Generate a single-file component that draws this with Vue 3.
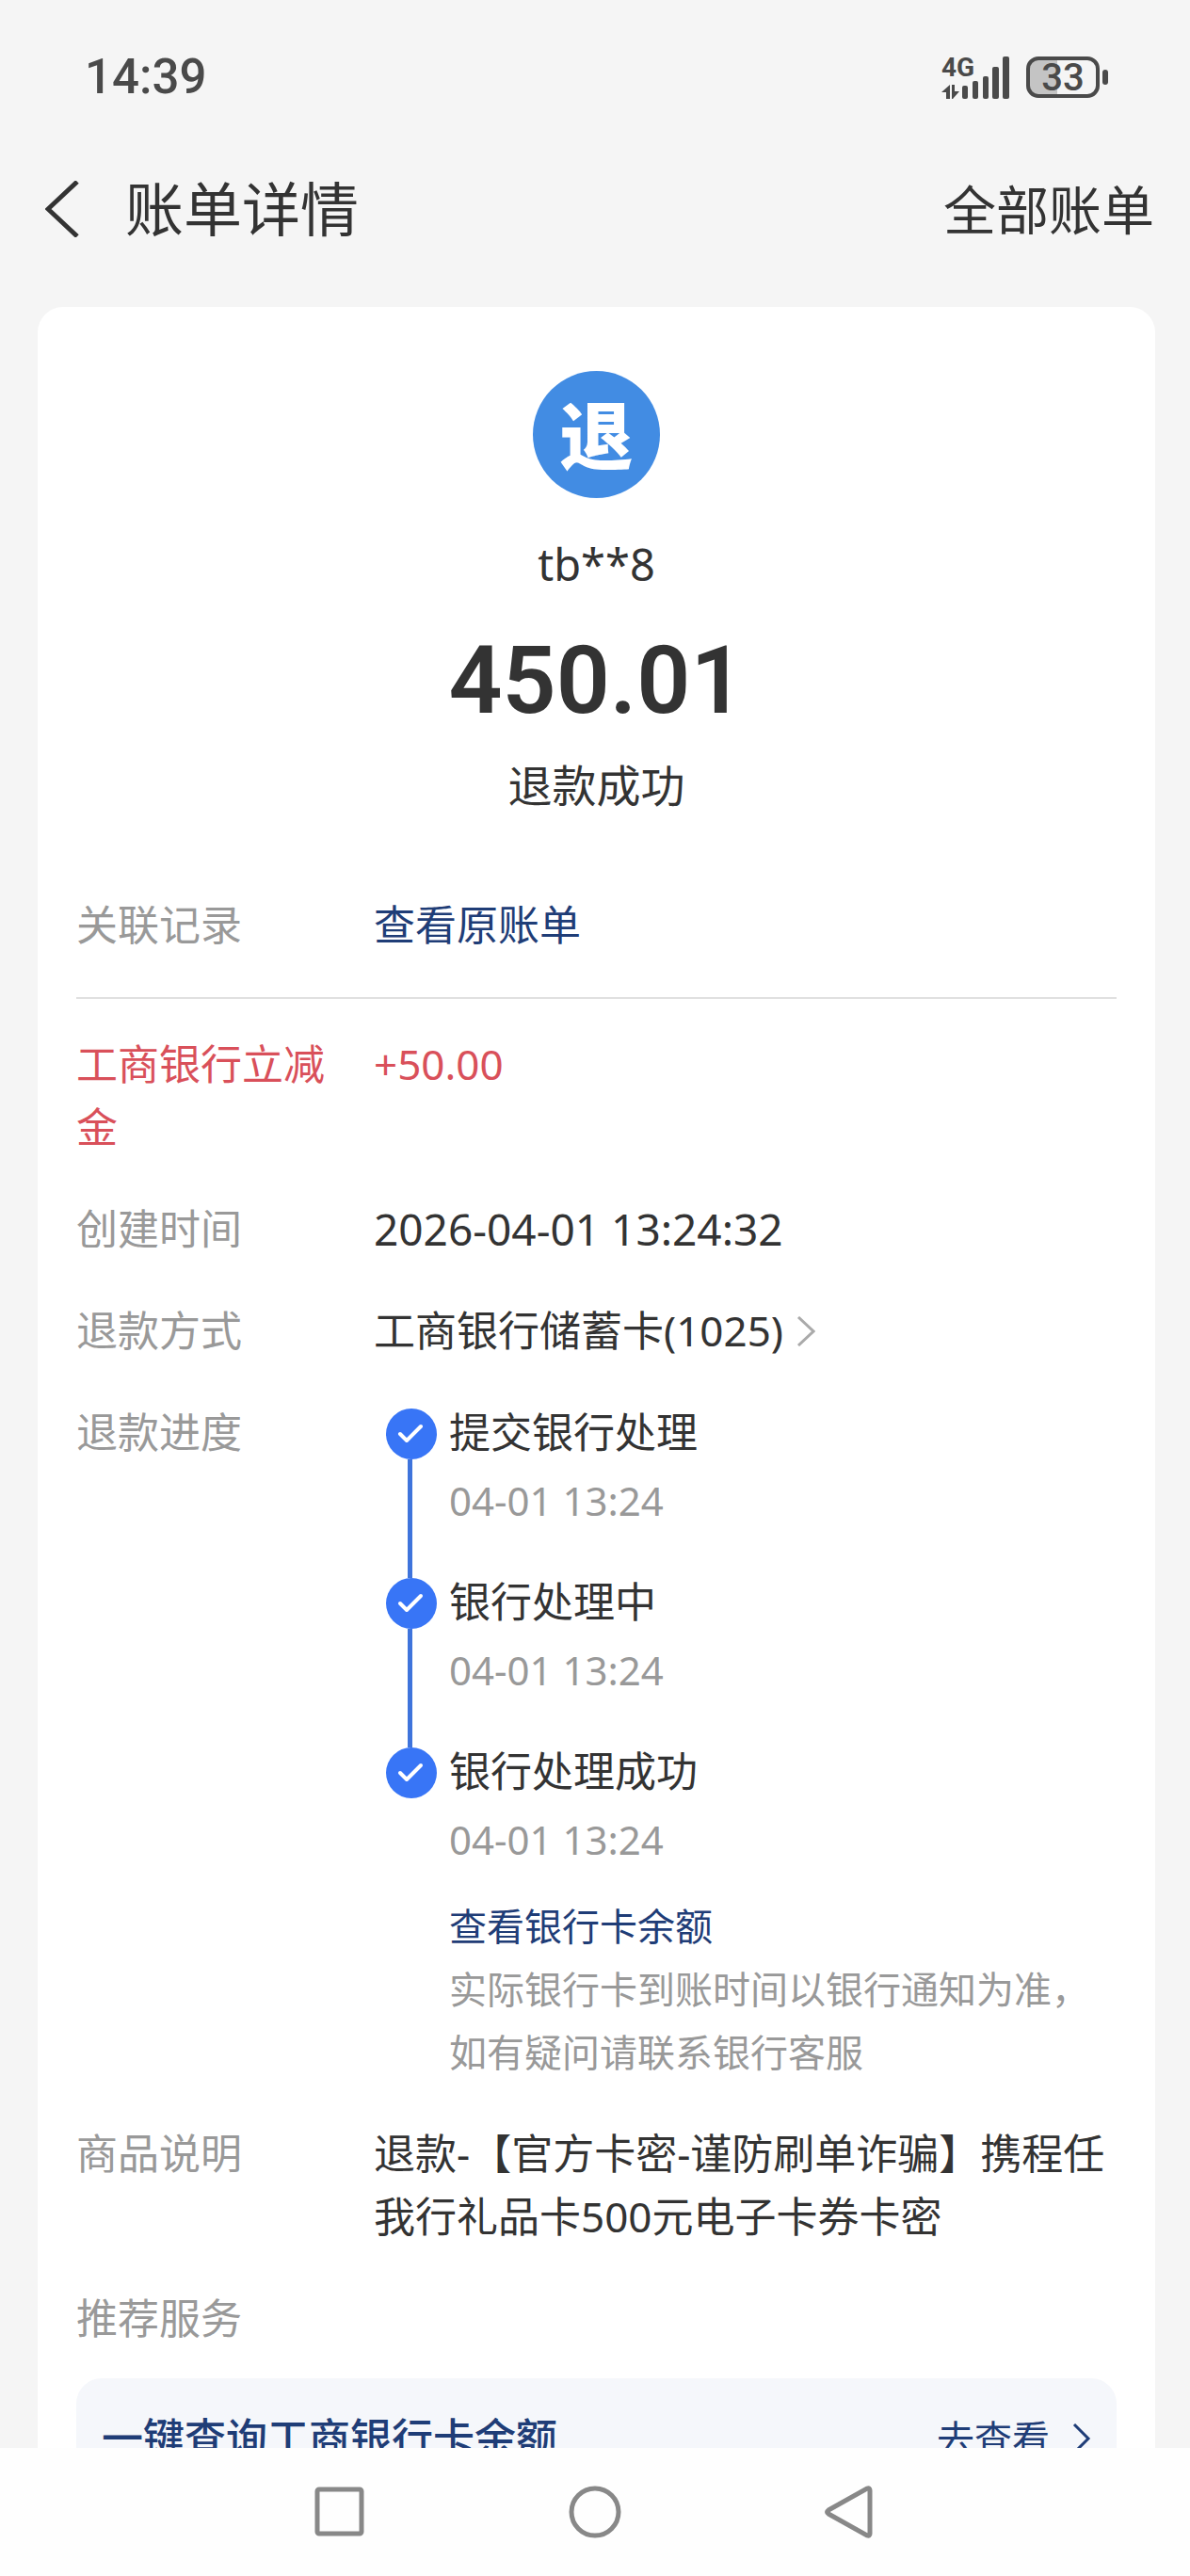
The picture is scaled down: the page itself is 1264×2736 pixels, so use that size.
<script setup>
const steps = [
  { title: '提交银行处理', time: '04-01 13:24' },
  { title: '银行处理中', time: '04-01 13:24' },
  { title: '银行处理成功', time: '04-01 13:24' },
]
</script>

<template>
  <div class="screen">
    <div class="status-bar">
      <time class="clock">14:39</time>
      <div class="indicators">
        <div class="network">
          <span class="network-type">4G</span>
          <svg class="signal" width="72" height="45" viewBox="0 0 72 45" aria-hidden="true">
            <g fill="#4a4a4a">
              <path d="M9 30V45H5V38H0ZM11 30H14V37H19L12 45H11Z" />
              <rect x="22" y="31" width="6" height="14" rx="2" />
              <rect x="33" y="26" width="6" height="19" rx="2" />
              <rect x="44" y="21" width="6" height="24" rx="2" />
              <rect x="54" y="11" width="7" height="34" rx="2" />
              <rect x="65" y="0" width="7" height="45" rx="2" />
            </g>
          </svg>
        </div>
        <div class="battery">
          <svg width="88" height="44" viewBox="0 0 88 44" aria-hidden="true">
            <path d="M14 3H33V41H14Q3 41 3 30V14Q3 3 14 3Z" fill="#c4c4c4" />
            <rect x="2" y="2" width="74" height="40" rx="11" fill="none" stroke="#4a4a4a" stroke-width="4" />
            <rect x="81" y="14" width="6" height="16" rx="3" fill="#4a4a4a" />
          </svg>
          <span class="battery-level">33</span>
        </div>
      </div>
    </div>

    <header class="header">
      <button class="back" type="button" aria-label="返回">
        <svg width="36" height="60" viewBox="0 0 36 60" aria-hidden="true">
          <path d="M34 1L3 30L34 59" fill="none" stroke="#333" stroke-width="5" />
        </svg>
      </button>
      <h1 class="title">账单详情</h1>
      <a class="all-bills" href="#">全部账单</a>
    </header>

    <main class="content">
      <section class="card">
        <div class="summary">
          <div class="badge">退</div>
          <div class="name">tb**8</div>
          <div class="amount">450.01</div>
          <div class="result">退款成功</div>
        </div>

        <dl class="rows related">
          <div class="row">
            <dt>关联记录</dt>
            <dd><a class="link" href="#">查看原账单</a></dd>
          </div>
        </dl>

        <dl class="rows">
          <div class="row discount">
            <dt>工商银行立减金</dt>
            <dd>+50.00</dd>
          </div>
          <div class="row">
            <dt>创建时间</dt>
            <dd class="created">2026-04-01 13:24:32</dd>
          </div>
          <div class="row">
            <dt>退款方式</dt>
            <dd>
              <a class="method" href="#">
                工商银行储蓄卡(1025)
                <svg width="20" height="32" viewBox="0 0 20 32" aria-hidden="true">
                  <path d="M2 1L18 16L2 31" fill="none" stroke="#aaa" stroke-width="3" />
                </svg>
              </a>
            </dd>
          </div>
          <div class="row">
            <dt>退款进度</dt>
            <dd>
              <ol class="steps">
                <li v-for="(step, i) in steps" :key="i" class="step">
                  <div class="marker">
                    <svg width="54" height="54" viewBox="0 0 54 54" aria-hidden="true">
                      <circle cx="27" cy="27" r="27" fill="#3875f6" />
                      <path d="M15 27L22 34L37 19" fill="none" stroke="#fff" stroke-width="4" stroke-linecap="round" stroke-linejoin="round" />
                    </svg>
                    <span v-if="i < steps.length - 1" class="connector"></span>
                  </div>
                  <div class="step-text">
                    <div>{{ step.title }}</div>
                    <time class="step-time">{{ step.time }}</time>
                  </div>
                </li>
              </ol>
              <div class="note">
                <a class="link" href="#">查看银行卡余额</a>
                <p>实际银行卡到账时间以银行通知为准，如有疑问请联系银行客服</p>
              </div>
            </dd>
          </div>
          <div class="row">
            <dt>商品说明</dt>
            <dd>退款-【官方卡密-谨防刷单诈骗】携程任我行礼品卡500元电子卡券卡密</dd>
          </div>
        </dl>

        <h2 class="section-title">推荐服务</h2>
        <a class="service" href="#">
          <span class="service-name">一键查询工商银行卡余额</span>
          <span class="service-action">
            去查看
            <svg width="20" height="32" viewBox="0 0 20 32" aria-hidden="true">
              <path d="M2 1L17 16L2 31" fill="none" stroke="#1f3d77" stroke-width="3" />
            </svg>
          </span>
        </a>
      </section>
    </main>

    <nav class="system-nav">
      <button type="button" aria-label="最近任务">
        <svg width="56" height="56" viewBox="0 0 56 56" aria-hidden="true">
          <rect x="4" y="4" width="47" height="47" rx="2" />
        </svg>
      </button>
      <button type="button" aria-label="主屏幕">
        <svg width="56" height="56" viewBox="0 0 56 56" aria-hidden="true">
          <circle cx="28" cy="28" r="25" />
        </svg>
      </button>
      <button type="button" aria-label="返回上一级">
        <svg width="56" height="56" viewBox="0 0 56 56" aria-hidden="true">
          <path d="M5 26L46 3Q49 2 49 5V51Q49 54 46 53L5 30Q2 28 5 26Z" />
        </svg>
      </button>
    </nav>
  </div>
</template>

<style>
body {
  margin: 0;
  background: #f5f5f5;
}
</style>

<style scoped>
.screen {
  display: flex;
  flex-direction: column;
  height: 100vh;
  background: #f5f5f5;
  color: #333;
  font-family: "Noto Sans", "Noto Sans CJK SC", sans-serif;
  font-size: 44px;
  line-height: 67px;
}

a {
  color: inherit;
  text-decoration: none;
}

button {
  display: block;
  padding: 0;
  border: 0;
  background: none;
  cursor: pointer;
}

svg {
  display: block;
  flex: none;
}

h1,
h2,
p,
dl,
dd,
ol {
  margin: 0;
  padding: 0;
  font-weight: 400;
}

.status-bar {
  display: flex;
  flex: none;
  justify-content: space-between;
  align-items: center;
  padding: 47px 86px 0 90px;
  color: #4a4a4a;
  font-family: Roboto, sans-serif;
  font-weight: 500;
  line-height: 70px;
}

.clock {
  font-size: 51px;
}

.indicators {
  display: flex;
  gap: 18px;
}

.network,
.battery {
  position: relative;
}

.network-type {
  position: absolute;
  top: 0;
  left: 0;
  font-size: 28px;
  font-weight: 700;
  line-height: 24px;
}

.battery-level {
  position: absolute;
  top: 0;
  left: 0;
  width: 78px;
  font-size: 40px;
  line-height: 45px;
  text-align: center;
}

.header {
  display: flex;
  flex: none;
  align-items: center;
  height: 209px;
  padding: 0 38px 0 48px;
}

.title {
  flex: 1;
  margin-left: 49px;
  font-size: 62px;
  line-height: 84px;
}

.all-bills {
  font-size: 56px;
  line-height: 84px;
}

.content {
  flex: 1;
  min-height: 0;
  overflow-y: auto;
  scrollbar-width: none;
  padding: 0 37px 0 40px;
}

.card {
  padding: 68px 41px 41px;
  border-radius: 27px;
  background: #fff;
}

.summary {
  display: flex;
  flex-direction: column;
  align-items: center;
  font-size: 47px;
}

.badge {
  width: 135px;
  height: 135px;
  border-radius: 50%;
  background: #428ce3;
  color: #fff;
  font-size: 78px;
  font-weight: 900;
  font-family: "Noto Sans CJK SC", sans-serif;
  line-height: 131px;
  text-align: center;
}

.name {
  margin-top: 37px;
}

.amount {
  margin: 20px 0 8px;
  font-family: Roboto, sans-serif;
  font-size: 100px;
  font-weight: 600;
  line-height: 140px;
}

.rows {
  display: flex;
  flex-direction: column;
  gap: 41px;
}

.related {
  margin: 81px 0 36px;
  padding-bottom: 43px;
  border-bottom: 2px solid #e0e0e0;
}

.row {
  display: grid;
  grid-template-columns: 280px 1fr;
  column-gap: 36px;
}

.row dt,
.section-title {
  color: #999;
}

.row.discount dt,
.row.discount dd {
  color: #d9505a;
}

.created {
  font-size: 46px;
}

.link {
  color: #1f3d77;
}

.method {
  display: flex;
  align-items: center;
  gap: 14px;
}

.steps {
  padding-left: 13px;
  list-style: none;
}

.step {
  display: flex;
  gap: 13px;
}

.marker {
  display: flex;
  flex-direction: column;
  padding-top: 8px;
}

.connector {
  flex: 1;
  width: 5px;
  margin: 0 0 -8px 23px;
  background: #3f74dc;
}

.step-text {
  padding-bottom: 36px;
}

.step:last-child .step-text {
  padding-bottom: 0;
}

.step-time {
  display: block;
  color: #999;
  font-size: 42px;
  line-height: 77px;
}

.note {
  margin: 20px 0 0 80px;
  color: #999;
  font-size: 40px;
}

.section-title {
  margin-top: 41px;
  font-size: 44px;
}

.service {
  display: flex;
  justify-content: space-between;
  margin-top: 30px;
  padding: 30px 27px;
  border-radius: 27px;
  background: #f5f7fb;
  color: #1f3d77;
}

.service-name {
  font-weight: 500;
}

.service-action {
  display: flex;
  align-items: center;
  gap: 24px;
  font-size: 40px;
}

.system-nav {
  display: flex;
  flex: none;
  justify-content: center;
  align-items: center;
  gap: 17%;
  height: 136px;
  background: #fefefe;
}

.system-nav svg {
  fill: none;
  stroke: #888;
  stroke-width: 5;
}
</style>
